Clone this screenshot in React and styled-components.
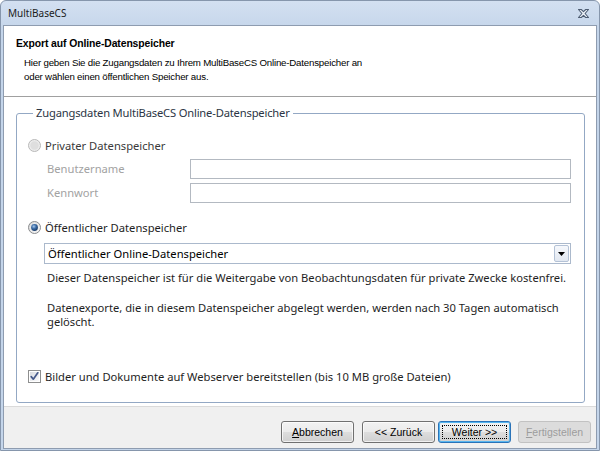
import React from "react";
import styled, { createGlobalStyle } from "styled-components";

const GlobalStyle = createGlobalStyle`
  html, body {
    margin: 0;
    padding: 0;
    background: #ffffff;
  }
  body {
    width: 600px;
    height: 451px;
    overflow: hidden;
  }
  * {
    box-sizing: border-box;
  }
`;

const uiFont = `"Noto Sans", "Open Sans", sans-serif`;
const classicFont = `"Liberation Sans", Arial, sans-serif`;

const Window = styled.div`
  width: 600px;
  height: 451px;
  display: flex;
  flex-direction: column;
  background: linear-gradient(#d3e0f1, #c4d5ea 30px, #c4d5ea);
  border: 1px solid #8696ac;
  border-radius: 6px 6px 0 0;
`;

const TitleBar = styled.div`
  height: 24px;
  flex: none;
  display: flex;
  align-items: center;
  justify-content: space-between;
  padding: 0 10px 0 7px;
`;

const TitleText = styled.span`
  font-family: ${uiFont};
  font-size: 10px;
  color: #1b1b1b;
`;

const Client = styled.div`
  flex: 1;
  display: flex;
  flex-direction: column;
  margin: 0 2px 1px 2px;
  border: 1px solid #8e9cb0;
  background: #ffffff;
`;

const Header = styled.div`
  height: 71px;
  flex: none;
  padding: 11px 12px 0 12px;
  border-bottom: 1px solid #a0a0a0;
  font-family: ${classicFont};
  color: #000;
`;

const HeaderTitle = styled.div`
  font-size: 10.4px;
  font-weight: bold;
  line-height: 14px;
  letter-spacing: -0.1px;
`;

const HeaderText = styled.div`
  margin: 5px 0 0 8px;
  font-size: 9.7px;
  line-height: 14px;
  letter-spacing: -0.2px;
`;

const Content = styled.div`
  flex: 1;
  display: flex;
  padding: 8px 11px 3px 12px;
`;

const GroupBox = styled.fieldset`
  flex: 1;
  margin: 0;
  padding: 0 13px 0 11px;
  border: 1px solid #93a8c4;
  border-radius: 3px;
  min-width: 0;
  font-family: ${uiFont};
  font-size: 11.2px;
  color: #222;
`;

const GroupLegend = styled.legend`
  margin-left: 5px;
  padding: 0 3px;
  line-height: 16px;
  color: #2b3544;
  letter-spacing: -0.18px;
`;

const OptionRow = styled.label`
  display: flex;
  align-items: center;
  gap: 4px;
  height: 16px;
  margin-top: ${(p) => p.$top}px;
  color: ${(p) => (p.$muted ? "#3a3a3a" : "#1e1e1e")};
`;

const FieldGrid = styled.div`
  display: grid;
  grid-template-columns: 143px 1fr;
  row-gap: 4px;
  margin: 6px 0 0 19px;
`;

const FieldLabel = styled.span`
  line-height: 20px;
  color: #a2a2a2;
`;

const TextBox = styled.div`
  height: 20px;
  border: 1px solid #b3b9c1;
  background: #ffffff;
`;

const ComboBox = styled.div`
  display: flex;
  align-items: center;
  justify-content: space-between;
  height: 21px;
  margin: 8px 0 0 16px;
  padding: 0 1px 0 3px;
  border: 1px solid #abb9cc;
  color: #000;
`;

const ComboButton = styled.div`
  width: 15px;
  height: 17px;
  display: flex;
  align-items: center;
  justify-content: center;
  border: 1px solid #b4c2d6;
  border-radius: 2px;
  background: linear-gradient(#f6f8fc, #e2e8f1);
`;

const Note = styled.p`
  margin: ${(p) => p.$top}px 0 0 19px;
  line-height: 14px;
  color: #1e1e1e;
`;

const Footer = styled.div`
  height: 42px;
  flex: none;
  display: flex;
  justify-content: flex-end;
  align-items: flex-start;
  padding: 14px 5px 0 0;
  border-top: 1px solid #dadada;
  background: #f0f0f0;
`;

const WizardButton = styled.button`
  position: relative;
  width: 73px;
  height: 22px;
  margin: 0 0 0 ${(p) => p.$gap || 0}px;
  padding: 0;
  font-family: ${classicFont};
  font-size: 10.5px;
  color: #000;
  border: 1px solid #707070;
  border-radius: 3px;
  background: linear-gradient(#f2f2f2 0%, #ebebeb 48%, #dddddd 52%, #cfcfcf 100%);
  box-shadow: inset 0 0 0 1px rgba(255, 255, 255, 0.7);

  ${(p) =>
    p.$focused &&
    `
    border-color: #2a73b8;
    box-shadow: inset 0 0 0 1px #58b6ef;
    &::after {
      content: "";
      position: absolute;
      inset: 3px;
      border: 1px dotted #000;
    }
  `}

  &:disabled {
    color: #9c9c9c;
    border-color: #c2c2c2;
    background: #dcdcdc;
    box-shadow: none;
  }

  u {
    text-decoration-thickness: 1px;
    text-underline-offset: 1px;
  }
`;

const CloseGlyph = () => (
  <svg width="11" height="9" viewBox="0 0 11 9">
    <polygon
      points="0.5,0.5 3.3,0.5 5.5,2.7 7.7,0.5 10.5,0.5 7.1,4.5 10.5,8.5 7.7,8.5 5.5,6.3 3.3,8.5 0.5,8.5 3.9,4.5"
      fill="#eef2f8"
      stroke="#4e5d73"
      strokeWidth="1.1"
      strokeLinejoin="round"
    />
  </svg>
);

const RadioMark = ({ checked, disabled }) => (
  <svg width="13" height="13" viewBox="0 0 13 13" style={{ flex: "none" }}>
    <defs>
      <radialGradient id="dot" cx="0.4" cy="0.35" r="0.7">
        <stop offset="0" stopColor="#a9c8ea" />
        <stop offset="0.45" stopColor="#3d6ea8" />
        <stop offset="1" stopColor="#12325e" />
      </radialGradient>
      <linearGradient id="rfill" x1="0" y1="0" x2="1" y2="1">
        <stop offset="0" stopColor="#d6d6d6" />
        <stop offset="1" stopColor="#fbfbfb" />
      </linearGradient>
    </defs>
    <circle
      cx="6.5"
      cy="6.5"
      r="6"
      fill={disabled ? "#ececec" : "url(#rfill)"}
      stroke={disabled ? "#b9b9b9" : "#8a8c8e"}
    />
    <circle cx="6.5" cy="6.5" r="4.2" fill={disabled ? "#dedede" : "#ebebeb"} />
    {checked && <circle cx="6.5" cy="6.5" r="3.4" fill="url(#dot)" />}
  </svg>
);

const CheckMark = () => (
  <svg width="13" height="13" viewBox="0 0 13 13" style={{ flex: "none" }}>
    <defs>
      <linearGradient id="cfill" x1="0" y1="0" x2="1" y2="1">
        <stop offset="0" stopColor="#d8dbe0" />
        <stop offset="1" stopColor="#fbfbfc" />
      </linearGradient>
    </defs>
    <rect x="0.5" y="0.5" width="12" height="12" fill="#fff" stroke="#8e8f8f" />
    <rect x="2" y="2" width="9" height="9" fill="url(#cfill)" />
    <path
      d="M3.2 6.6 L5.3 9.2 L9.8 2.8"
      fill="none"
      stroke="#45598a"
      strokeWidth="1.7"
      strokeLinecap="round"
      strokeLinejoin="round"
    />
  </svg>
);

const DropArrow = () => (
  <svg width="7" height="4" viewBox="0 0 7 4">
    <polygon points="0,0 7,0 3.5,4" fill="#000" />
  </svg>
);

export default function App() {
  return (
    <>
      <GlobalStyle />
      <Window>
        <TitleBar>
          <TitleText>MultiBaseCS</TitleText>
          <CloseGlyph />
        </TitleBar>
        <Client>
          <Header>
            <HeaderTitle>Export auf Online-Datenspeicher</HeaderTitle>
            <HeaderText>
              Hier geben Sie die Zugangsdaten zu Ihrem MultiBaseCS Online-Datenspeicher an
              <br />
              oder wählen einen öffentlichen Speicher aus.
            </HeaderText>
          </Header>
          <Content>
            <GroupBox>
              <GroupLegend>Zugangsdaten MultiBaseCS Online-Datenspeicher</GroupLegend>
              <OptionRow $top={16} $muted>
                <RadioMark disabled />
                Privater Datenspeicher
              </OptionRow>
              <FieldGrid>
                <FieldLabel>Benutzername</FieldLabel>
                <TextBox />
                <FieldLabel>Kennwort</FieldLabel>
                <TextBox />
              </FieldGrid>
              <OptionRow $top={16}>
                <RadioMark checked />
                Öffentlicher Datenspeicher
              </OptionRow>
              <ComboBox>
                <span>Öffentlicher Online-Datenspeicher</span>
                <ComboButton>
                  <DropArrow />
                </ComboButton>
              </ComboBox>
              <Note $top={7}>
                Dieser Datenspeicher ist für die Weitergabe von Beobachtungsdaten für private Zwecke kostenfrei.
              </Note>
              <Note $top={16}>
                Datenexporte, die in diesem Datenspeicher abgelegt werden, werden nach 30 Tagen automatisch
                <br />
                gelöscht.
              </Note>
              <OptionRow $top={39}>
                <CheckMark />
                Bilder und Dokumente auf Webserver bereitstellen (bis 10 MB große Dateien)
              </OptionRow>
            </GroupBox>
          </Content>
          <Footer>
            <WizardButton>
              <u>A</u>bbrechen
            </WizardButton>
            <WizardButton $gap={8}>&lt;&lt; Zurück</WizardButton>
            <WizardButton $gap={3} $focused>
              Weiter &gt;&gt;
            </WizardButton>
            <WizardButton $gap={7} disabled>
              <u>F</u>ertigstellen
            </WizardButton>
          </Footer>
        </Client>
      </Window>
    </>
  );
}
